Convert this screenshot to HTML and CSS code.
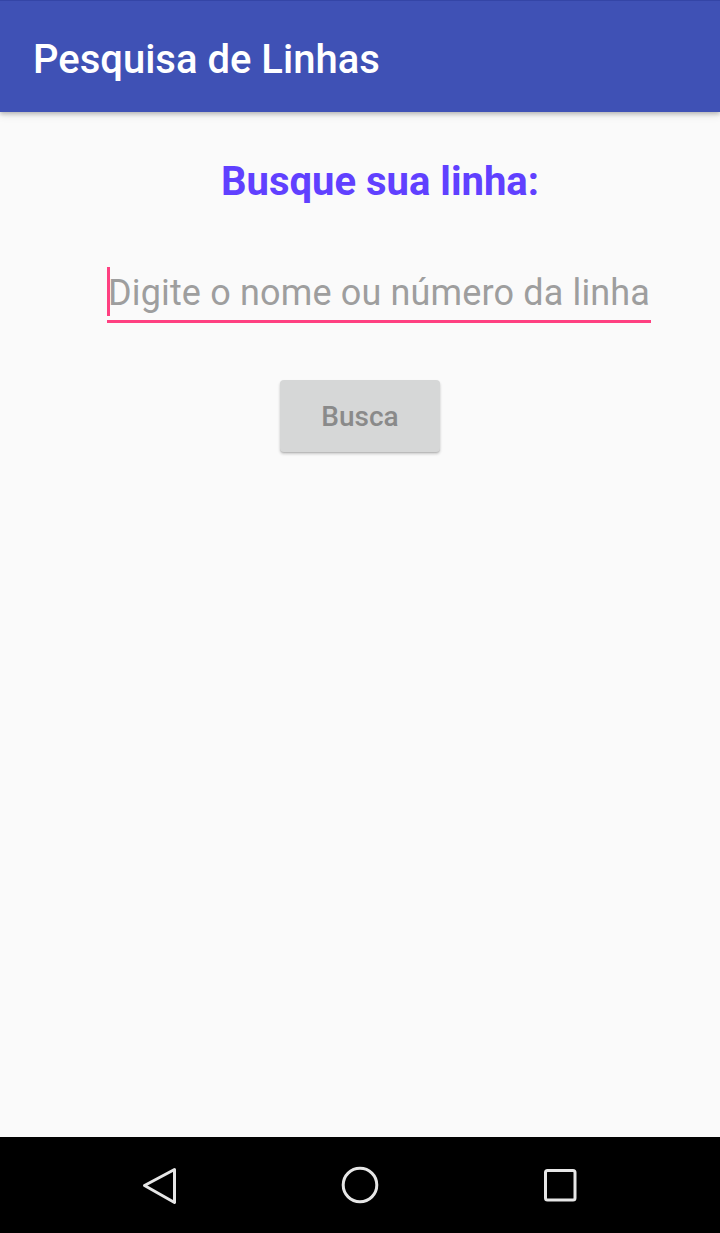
FILE: index.html
```html
<!DOCTYPE html>
<html lang="pt">
<head>
<meta charset="utf-8">
<title>Pesquisa de Linhas</title>
<link rel="stylesheet" href="styles.css">
</head>
<body>
<div class="screen">
  <header class="appbar">
    <h1 class="appbar-title">Pesquisa de Linhas</h1>
  </header>
  <main class="content">
    <div class="form">
      <h2 class="heading">Busque sua linha:</h2>
      <div class="field">
        <span class="caret"></span>
        <span class="placeholder">Digite o nome ou número da linha</span>
      </div>
    </div>
    <div class="actions">
      <button class="btn" type="button">Busca</button>
    </div>
  </main>
  <nav class="navbar">
    <svg class="nav-icon" width="40" height="40" viewBox="0 0 40 40">
      <path d="M34.5 4.5 L4.5 20.5 L34.5 37.5 Z" fill="none" stroke="#e6e6e6" stroke-width="3" stroke-linejoin="round"/>
    </svg>
    <svg class="nav-icon" width="40" height="40" viewBox="0 0 40 40">
      <circle cx="20" cy="20" r="16.8" fill="none" stroke="#e6e6e6" stroke-width="3"/>
    </svg>
    <svg class="nav-icon" width="40" height="40" viewBox="0 0 40 40">
      <rect x="5.5" y="5.5" width="29.5" height="29.5" rx="2" fill="none" stroke="#e6e6e6" stroke-width="3"/>
    </svg>
  </nav>
</div>
</body>
</html>
```

FILE: styles.css
```css
* { box-sizing: border-box; }

html, body {
  margin: 0;
  padding: 0;
  width: 720px;
  height: 1233px;
  overflow: hidden;
  background: #fafafa;
  font-family: Roboto, "Noto Sans", "Liberation Sans", sans-serif;
}

.screen {
  width: 720px;
  height: 1233px;
  display: flex;
  flex-direction: column;
}

.appbar {
  position: relative;
  z-index: 2;
  height: 112px;
  flex: 0 0 112px;
  background: #3f51b5;
  border-top: 1px solid #3445a6;
  display: flex;
  align-items: center;
  padding-left: 33px;
  box-shadow: 0 2px 4px rgba(0,0,0,0.22), 0 4px 8px rgba(0,0,0,0.08);
}

.appbar-title {
  margin: 0;
  color: #ffffff;
  font-size: 40px;
  font-weight: 500;
  line-height: 47px;
  padding-top: 6px;
  letter-spacing: 0;
}

.content {
  flex: 1 1 auto;
  display: flex;
  flex-direction: column;
  background: #fafafa;
}

.form {
  width: 544px;
  margin-left: 107px;
  display: flex;
  flex-direction: column;
}

.heading {
  margin: 46px 0 0 0;
  padding-left: 2px;
  text-align: center;
  color: #6040ff;
  font-size: 40px;
  font-weight: 700;
  line-height: 47px;
}

.field {
  margin-top: 62px;
  display: flex;
  align-items: center;
  height: 56px;
  padding-bottom: 4px;
  border-bottom: 3px solid #ff4081;
}

.caret {
  flex: 0 0 3px;
  width: 3px;
  height: 49px;
  background: #ff4081;
}

.placeholder {
  color: #9e9e9e;
  font-size: 36px;
  line-height: 42px;
  padding-top: 3px;
  margin-left: -2px;
  white-space: nowrap;
  letter-spacing: 0.15px;
}

.actions {
  display: flex;
  justify-content: center;
  margin-top: 57px;
}

.btn {
  width: 160px;
  height: 72px;
  border: none;
  border-radius: 4px;
  background: #d6d7d7;
  color: #8a8a8a;
  font-family: Roboto, "Noto Sans", "Liberation Sans", sans-serif;
  font-size: 28px;
  font-weight: 500;
  padding: 0;
  box-shadow: 0 2px 3px rgba(0,0,0,0.2), 0 1px 1px rgba(0,0,0,0.1);
}

.navbar {
  flex: 0 0 96px;
  height: 96px;
  background: #000000;
  display: flex;
  align-items: center;
  justify-content: space-between;
  padding: 0 140px 0 140px;
}

.nav-icon {
  display: block;
}
```
